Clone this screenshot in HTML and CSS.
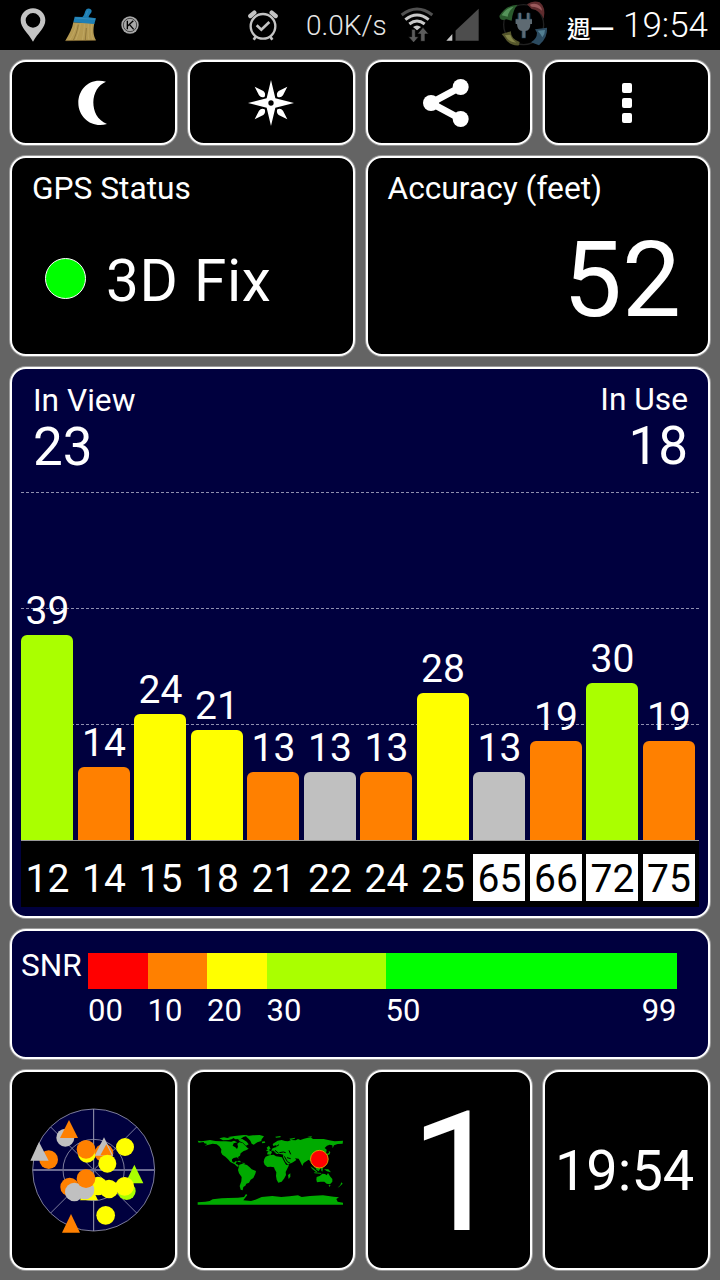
FILE: index.html
```
<!DOCTYPE html>
<html lang="en">

<head>
    <meta charset="UTF-8">
    <meta name="viewport" content="width=device-width, initial-scale=1.0">
    <title>GPS Status</title>
    <link rel="stylesheet" href="styles.css">
</head>

<body>
    <div class="status-bar">
        <svg class="icon-pin" width="26" height="34" viewBox="0 0 78 102">
            <path fill="#c4c4c4" fill-rule="evenodd" d="M39 1C18 1 2 17 2 37c0 22 22 38 37 64 15-26 37-42 37-64C76 17 60 1 39 1zm0 14a22 22 0 1 1 0 44 22 22 0 0 1 0-44z"/>
        </svg>
        <svg class="icon-broom" width="32" height="34" viewBox="0 0 96 102">
            <path fill="#b59a52" d="M25 43L88 46C84 64 84 82 93 97L1 98C12 80 22 62 25 43z"/>
            <path fill="none" stroke="#c4ac68" stroke-width="2" d="M34 47C31 68 22 84 14 96M46 47C44 68 37 84 32 96M58 47C58 68 54 84 52 96M70 47C70 66 68 82 72 96M80 48C78 66 78 82 84 96"/>
            <path fill="none" stroke="#7d6530" stroke-width="2" d="M40 50C37 70 30 86 25 97M64 60C63 76 61 88 61 97M2 98L92 97"/>
            <path fill="#1e7fb4" d="M29 26L52 27C60 22 58 10 65 3C70-1 80 2 80 9C79 18 71 20 71 28L93 31L88 48L25 43z"/>
            <path fill="none" stroke="#3f95c0" stroke-width="2" d="M31 30L90 34M68 8L63 23"/>
        </svg>
        <svg class="icon-k" width="18" height="18" viewBox="0 0 54 54">
            <circle cx="27" cy="27" r="26" fill="#a8a8a8"/>
            <circle cx="27" cy="27" r="20" fill="none" stroke="#111" stroke-width="2"/>
            <path fill="none" stroke="#000" stroke-width="4" d="M19 14V40M37 14L20 30M25 25L38 40"/>
        </svg>
        <svg class="icon-alarm" width="32" height="34" viewBox="0 0 96 102">
            <g fill="none" stroke="#c4c4c4">
                <circle cx="48" cy="55" r="37" stroke-width="7"/>
                <path stroke-width="8" d="M29 52L43 65L67 42"/>
                <path stroke-width="13" stroke-linecap="round" d="M10 24L22 14M86 24L74 14"/>
                <path stroke-width="8" d="M26 86L20 95M70 86L76 95"/>
            </g>
        </svg>
        <span class="net-speed">0.0K/s</span>
        <svg class="icon-wifi" width="34" height="36" viewBox="0 0 102 108">
            <g fill="none" stroke="#c8c8c8" stroke-width="9">
                <path stroke="#505050" d="M5 27Q51-9 97 27"/>
                <path d="M16 41Q51 13 86 41"/>
                <path d="M28 54Q51 36 74 54"/>
            </g>
            <path fill="#c8c8c8" d="M39 63Q51 54 63 63L51 73z"/>
            <path fill="#5c5c5c" stroke="#000" stroke-width="2" d="M35 70h11v22h10L41 110L25 92h10zM62 106V84H52L69 64L86 84H75v22z"/>
        </svg>
        <svg class="icon-signal" width="33" height="34" viewBox="0 0 99 102">
            <path fill="#4d4d4d" d="M98 2V98H28V68z"/>
            <path fill="#000" d="M19 60H28V98H19z"/>
            <path fill="#c8c8c8" d="M19 78V98H1z"/>
        </svg>
        <svg class="icon-plug" width="50" height="48" viewBox="0 0 150 144">
            <circle cx="74" cy="74" r="60" fill="none" stroke="#202020" stroke-width="4"/>
            <path fill="#5f2c2e" d="M84 13Q102 0 122 7Q142 22 134 56Q123 30 98 27z"/>
            <path fill="#9a5a5c" d="M92 14Q110 8 122 17Q128 22 129 32Q116 20 98 20z"/>
            <path fill="#2c4b60" d="M144 83Q147 112 120 136L96 127Q114 116 114 98L108 88z"/>
            <path fill="#527f92" d="M116 92L138 90Q138 102 130 112Q124 100 116 92z"/>
            <path fill="#55562c" d="M36 94Q34 116 62 126L60 136Q30 138 16 112L8 102z"/>
            <path fill="#85864a" d="M18 106L34 104Q38 118 52 128Q30 128 18 106z"/>
            <path fill="#2a5a2d" d="M56 14Q42 28 38 62L22 58Q3 64 1 48Q20 15 56 14z"/>
            <path fill="#55935a" d="M8 46Q20 24 44 20Q28 34 26 50z"/>
            <path fill="none" stroke="#123f5a" stroke-width="12" d="M62 40V66M88 40V66M50 62H98M74 90V115"/>
            <path fill="#5e6a72" d="M59 38h7v20h18V38h7v20h8v14H94q0 20-15 21v20h-9V93q-15-1-16-21h-4V58h9z"/>
        </svg>
        <span class="weekday">週一</span>
        <span class="clock">19:54</span>
    </div>

    <div class="dashboard">
        <div class="panel button">
            <svg width="30" height="46" viewBox="0 0 90 138">
                <path fill="#fff" d="M84 5C34-8 1 28 1 69C1 112 42 146 87 132C57 120 46 94 46 67C46 40 60 14 84 5z"/>
            </svg>
        </div>
        <div class="panel button">
            <svg width="46" height="46" viewBox="-69 -69 138 138">
                <path fill="#fff" fill-rule="evenodd" d="M0-69L13-14L69 0L13 14L0 69L-13 14L-69 0L-13-14zM0-8a8 8 0 1 0 0 16a8 8 0 0 0 0-16z"/>
                <path fill="#fff" d="M49-49L36-23Q29-14 19-19Q15-29 23-36zM-49-49L-36-23Q-29-14-19-19Q-15-29-23-36zM49 49L36 23Q29 14 19 19Q15 29 23 36zM-49 49L-36 23Q-29 14-19 19Q-15 29-23 36z"/>
            </svg>
        </div>
        <div class="panel button">
            <svg class="share" width="46" height="48" viewBox="0 0 138 144">
                <path fill="none" stroke="#fff" stroke-width="21" d="M113 24L24 72L113 120"/>
                <circle cx="24" cy="72" r="24" fill="#fff"/>
                <circle cx="113" cy="24" r="24" fill="#fff"/>
                <circle cx="113" cy="120" r="24" fill="#fff"/>
            </svg>
        </div>
        <div class="panel button dots">
            <span></span>
            <span></span>
            <span></span>
        </div>

        <div class="panel half">
            <h2>GPS Status</h2>
            <div class="fix">
                <span class="fix-light"></span>
                <span class="fix-text">3D Fix</span>
            </div>
        </div>
        <div class="panel half">
            <h2>Accuracy (feet)</h2>
            <div class="accuracy">52</div>
        </div>

        <div class="panel wide satellites">
            <div class="counts">
                <div>
                    <h2>In View</h2>
                    <div class="count">23</div>
                </div>
                <div class="in-use">
                    <h2>In Use</h2>
                    <div class="count">18</div>
                </div>
            </div>
            <div class="chart">
                <div class="gridlines">
                    <span></span>
                    <span></span>
                    <span></span>
                </div>
                <div class="col"><span>39</span><div class="bar lime" style="height: 205px"></div></div>
                <div class="col"><span>14</span><div class="bar orange" style="height: 73.5px"></div></div>
                <div class="col"><span>24</span><div class="bar yellow" style="height: 126px"></div></div>
                <div class="col"><span>21</span><div class="bar yellow" style="height: 110px"></div></div>
                <div class="col"><span>13</span><div class="bar orange" style="height: 68px"></div></div>
                <div class="col"><span>13</span><div class="bar gray" style="height: 68px"></div></div>
                <div class="col"><span>13</span><div class="bar orange" style="height: 68px"></div></div>
                <div class="col"><span>28</span><div class="bar yellow" style="height: 147px"></div></div>
                <div class="col"><span>13</span><div class="bar gray" style="height: 68px"></div></div>
                <div class="col"><span>19</span><div class="bar orange" style="height: 99.5px"></div></div>
                <div class="col"><span>30</span><div class="bar lime" style="height: 157.5px"></div></div>
                <div class="col"><span>19</span><div class="bar orange" style="height: 99.5px"></div></div>
            </div>
            <div class="ids">
                <span>12</span>
                <span>14</span>
                <span>15</span>
                <span>18</span>
                <span>21</span>
                <span>22</span>
                <span>24</span>
                <span>25</span>
                <span class="glonass">65</span>
                <span class="glonass">66</span>
                <span class="glonass">72</span>
                <span class="glonass">75</span>
            </div>
        </div>

        <div class="panel wide snr">
            <div class="snr-title">SNR</div>
            <div class="scale">
                <div class="red"></div>
                <div class="orange"></div>
                <div class="yellow"></div>
                <div class="lime"></div>
                <div class="green"></div>
                <span>00</span>
                <span>10</span>
                <span>20</span>
                <span>30</span>
                <span class="last"><b>50</b><b>99</b></span>
            </div>
        </div>

        <div class="panel button">
            <svg class="radar" width="126" height="126" viewBox="74 126 378 378">
                <circle cx="265" cy="315" r="183" fill="#00003e"/>
                <g fill="none" stroke="#9c9cb4" stroke-width="2.4">
                    <circle cx="265" cy="315" r="183"/>
                    <circle cx="265" cy="315" r="92"/>
                    <path d="M136 186L394 444M394 186L136 444"/>
                    <path stroke-width="3" d="M265 132V498"/>
                    <path stroke="#6c6c92" stroke-width="6" d="M82 315H448"/>
                </g>
                <circle cx="180" cy="218" r="27" fill="#c0c0c0"/>
                <path fill="#ff8000" d="M191 165L218 219H164z"/>
                <circle cx="130" cy="284" r="28" fill="#ff8000"/>
                <path fill="#c0c0c0" d="M101 231L130 287H75z"/>
                <circle cx="245" cy="266" r="27" fill="#ff0"/>
                <circle cx="242" cy="253" r="28" fill="#ff8000"/>
                <circle cx="296" cy="264" r="28" fill="#ff8000"/>
                <path fill="#c0c0c0" d="M296 217L324 272H268z"/>
                <path fill="#ff8000" d="M303 238L319 270L302 272L285 271z"/>
                <circle cx="306" cy="296" r="27" fill="#ff0"/>
                <circle cx="359" cy="246" r="27" fill="#ff0"/>
                <path fill="#af0" d="M387 299L414 355H360z"/>
                <circle cx="364" cy="378" r="27" fill="#af0"/>
                <circle cx="358" cy="364" r="28" fill="#ff0"/>
                <path fill="#ff0" d="M251 350L278 406H224z"/>
                <circle cx="278" cy="363" r="28" fill="#ff0"/>
                <circle cx="311" cy="372" r="28" fill="#ff0"/>
                <circle cx="193" cy="366" r="28" fill="#ff8000"/>
                <circle cx="239" cy="375" r="28" fill="#c0c0c0"/>
                <circle cx="207" cy="381" r="28" fill="#c0c0c0"/>
                <circle cx="242" cy="341" r="28" fill="#ff8000"/>
                <circle cx="301" cy="451" r="28" fill="#ff0"/>
                <path fill="#ff8000" d="M197 447L224 503H170z"/>
            </svg>
        </div>
        <div class="panel button">
            <svg class="world" width="148" height="72" viewBox="37 76 444 216">
                <g fill="#00aa00">
                    <path d="M39 96L50 98L62 96L76 94L92 97L108 98L124 98L140 99L148 96L158 101L147 104L144 111L152 116L157 121L160 114L158 105L164 101L174 103L180 109L188 117L192 120L184 125L177 127L168 134L166 141L160 145L162 151L157 146L147 148L142 152L142 158L148 162L152 158L157 158L153 165L160 168L163 173L158 174L150 167L137 160L130 152L122 144L113 138L109 131L110 122L104 113L96 107L84 105L72 108L60 111L68 106L59 104L57 100L42 102z"/>
                    <path d="M104 89L118 86L128 88L141 85L145 90L132 94L115 95zM130 85L150 82L178 79L193 80L176 85L168 91L152 92L146 88zM160 92L173 91L186 99L192 107L184 111L175 102L165 98z"/>
                    <path d="M183 83L205 80L225 79L238 83L231 92L230 97L218 101L207 108L201 105L197 96L190 89zM231 99L240 98L242 102L233 104z"/>
                    <path d="M157 157L165 156L170 161L161 160zM171 162L182 163L178 166z"/>
                    <path d="M164 168L174 165L187 169L195 176L201 182L214 187L212 195L206 208L198 213L193 222L185 225L182 231L176 235L174 245L168 243L165 232L170 218L171 205L163 194L160 184z"/>
                    <path d="M243 144L254 140L267 138L274 143L284 144L292 146L298 158L304 168L313 170L307 182L303 190L304 199L299 209L291 219L281 222L276 213L274 202L275 191L270 182L268 176L258 174L248 175L240 168L237 160L239 151z"/>
                    <path d="M310 199L317 194L317 204L312 211z"/>
                    <path d="M250 128L260 127L262 120L268 117L276 115L275 109L266 112L264 106L272 101L279 96L291 94L301 97L310 98L320 94L333 95L340 91L347 94L358 90L370 87L378 86L385 91L398 91L417 91L434 95L450 98L475 96L474 105L459 106L448 110L444 119L443 110L435 108L427 111L420 118L426 123L424 136L420 130L417 138L414 146L408 153L397 156L391 157L388 171L396 180L390 177L383 166L378 159L372 153L366 157L357 163L353 172L347 159L342 150L331 149L335 154L325 161L310 168L302 159L295 144L296 138L287 136L279 136L274 136L264 126L258 138L247 137z"/>
                    <path d="M246 117L253 111L258 121L250 124zM245 124L252 122L256 126L246 128zM272 84L288 82L287 86L274 87zM314 90L332 87L330 90L318 94zM368 84L382 83L380 86zM422 138L433 132L432 127L437 130L435 137L425 142z"/>
                    <path d="M377 173L386 179L398 189L395 191L382 180zM393 176L404 172L408 178L402 188L395 183zM409 178L415 179L413 189L410 186zM418 182L431 182L439 191L427 188zM388 191L410 193L409 195L390 194zM405 163L413 168L411 173L405 168z"/>
                    <path d="M396 205L405 202L413 195L421 196L426 200L430 193L436 203L443 211L443 219L436 227L426 225L419 219L408 219L397 221L395 213zM432 229L438 230L434 235zM470 221L474 225L464 234L459 237L467 229z"/>
                    <path d="M39 281L62 279L75 277L84 272L111 269L131 268L160 267L178 265L184 256L188 259L181 268L176 275L199 277L212 273L231 265L263 262L290 265L315 263L340 260L351 265L376 262L415 260L447 264L463 266L455 271L459 279L475 282V288H39z"/>
                </g>
                <g fill="none" stroke="#000" stroke-width="3">
                    <path d="M260 129L266 127L275 136M271 125L282 134M284 132L296 130L303 132M299 143L308 159L317 164M307 147L318 150M313 125L318 137M277 112L283 108M374 165L379 157"/>
                </g>
                <circle cx="404" cy="151.500" r="26.500" fill="#f00" stroke="#d6a000" stroke-width="3"/>
            </svg>
        </div>
        <div class="panel button big-number">1</div>
        <div class="panel button time">19:54</div>
    </div>
</body>

</html>
```

FILE: styles.css
```
* {
    box-sizing: border-box;
}

body {
    margin: 0;
    width: 720px;
    height: 1280px;
    background-color: #646464;
    color: #fff;
    font-family: Roboto, "Noto Sans CJK TC", sans-serif;
    overflow: hidden;
}

svg {
    display: block;
    flex: none;
}

/* Status bar */
.status-bar {
    display: flex;
    align-items: flex-start;
    height: 50px;
    padding: 0 0 0 20px;
    background-color: #000;
    font-weight: 300;
    white-space: nowrap;
}

.icon-pin {
    margin-top: 8px;
}

.icon-broom {
    margin: 8px 0 0 19px;
}

.icon-k {
    margin: 16px 0 0 24px;
}

.icon-alarm {
    margin: 8px 0 0 108px;
}

.net-speed {
    width: 82px;
    margin: 10px 0 0 27px;
    color: #e6e6e6;
    font-size: 28px;
    line-height: 32px;
}

.icon-wifi {
    margin: 6px 0 0 12px;
}

.icon-signal {
    margin: 8px 0 0 12px;
}

.icon-plug {
    margin: 0 0 0 20px;
}

.weekday {
    width: 48px;
    margin: 12px 0 0 18px;
    font-family: "Noto Sans CJK TC", sans-serif;
    font-size: 23.5px;
    font-weight: 500;
    line-height: 32px;
}

.clock {
    margin: 5px 0 0 8px;
    font-size: 35px;
    line-height: 41px;
}

/* Panels */
.dashboard {
    display: grid;
    grid-template-columns: repeat(4, 1fr);
    grid-template-rows: 85px 200px 551px 130px 200px;
    gap: 11px;
    padding: 10px;
}

.panel {
    min-width: 0;
    background-color: #000;
    border: 2px solid #fff;
    border-radius: 16px;
    box-shadow: 0 0 0 1px rgba(255, 255, 255, 0.35);
}

.half {
    grid-column: span 2;
    padding: 12px 20px;
}

.wide {
    grid-column: span 4;
    background-color: #00003e;
}

.button {
    display: flex;
    justify-content: center;
    align-items: center;
}

.panel h2 {
    margin: 0;
    font-size: 31.7px;
    font-weight: 400;
    line-height: 38px;
}

.share {
    margin-right: 6px;
}

.dots {
    flex-direction: column;
    gap: 5px;
}

.dots span {
    width: 10px;
    height: 10px;
    background-color: #fff;
    border-radius: 2px;
}

/* Fix and accuracy */
.fix {
    display: flex;
    align-items: center;
    gap: 20px;
    height: 76px;
    margin: 32px 0 0 13px;
}

.fix-light {
    width: 41px;
    height: 41px;
    background-color: #00ff00;
    border: 1px solid #fff;
    border-radius: 50%;
}

.fix-text {
    padding-top: 5px;
    font-size: 58.5px;
    letter-spacing: 0.7px;
}

.accuracy {
    margin: 11px 7px 0 0;
    font-size: 105px;
    line-height: 123px;
    text-align: right;
}

/* Satellite chart */
.satellites {
    padding: 13px 9px 9px;
}

.counts {
    display: flex;
    justify-content: space-between;
    height: 110px;
    padding: 0 11px 0 12px;
}

.count {
    font-size: 53px;
    line-height: 54px;
}

.in-use {
    margin-top: -1px;
    text-align: right;
}

.chart {
    position: relative;
    display: grid;
    grid-template-columns: repeat(12, 52px);
    column-gap: 4.5px;
    height: 348px;
}

.gridlines {
    position: absolute;
    inset: 0;
    display: flex;
    flex-direction: column;
    gap: 115px;
}

.gridlines span {
    height: 1px;
    background: repeating-linear-gradient(to right, #8f8faf 0 3px, transparent 3px 5px);
}

.col {
    position: relative;
    display: flex;
    flex-direction: column;
    justify-content: flex-end;
    align-items: center;
    height: 348px;
}

.col span {
    padding-left: 1px;
    font-size: 39px;
    line-height: 46px;
    margin-bottom: 1px;
}

.bar {
    width: 100%;
    border-radius: 6px 6px 0 0;
}

.ids {
    display: grid;
    grid-template-columns: repeat(12, 52px);
    column-gap: 4.5px;
    height: 67px;
    padding-top: 13px;
    background-color: #000;
    border-top: 1px solid #999;
}

.ids span {
    height: 47px;
    padding-left: 1px;
    font-size: 39px;
    line-height: 50px;
    text-align: center;
}

.ids .glonass {
    background-color: #fff;
    color: #000;
}

.red {
    background-color: #ff0000;
}

.orange {
    background-color: #ff8000;
}

.yellow {
    background-color: #ffff00;
}

.lime {
    background-color: #aaff00;
}

.green {
    background-color: #00ff00;
}

.gray {
    background-color: #c0c0c0;
}

/* SNR legend */
.snr {
    display: flex;
    padding: 22px 0 0 9px;
}

.snr-title {
    width: 67px;
    margin-top: -6px;
    font-size: 31.5px;
    line-height: 38px;
}

.scale {
    display: grid;
    grid-template-columns: 59.5px 59.5px 59.5px 119px 291px;
    grid-template-rows: 36px 40px;
}

.scale span {
    font-size: 31px;
    line-height: 43px;
}

.scale b {
    font-weight: 400;
}

.scale .last {
    display: flex;
    justify-content: space-between;
}

/* Bottom row */
.big-number {
    padding: 5px 0 0 16px;
    font-size: 167px;
}

.time {
    padding: 2px 4px 0 0;
    font-size: 56px;
}
```
